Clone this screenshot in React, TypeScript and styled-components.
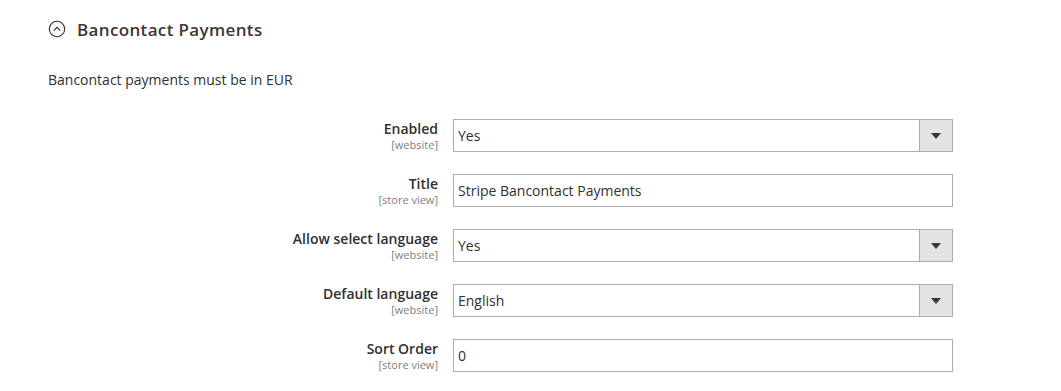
import React from 'react';
import styled, { createGlobalStyle } from 'styled-components';

const GlobalStyle = createGlobalStyle`
  html, body {
    margin: 0;
    padding: 0;
    background: #ffffff;
    font-family: "Open Sans", "Liberation Sans", Arial, sans-serif;
  }
`;

const Page = styled.div`
  padding: 15px 0 0 48px;
  width: 905px;
`;

const SectionTitle = styled.div`
  display: flex;
  align-items: center;
  gap: 11px;
  height: 28px;
  color: #41362f;
  font-size: 17px;
  font-weight: 600;
  letter-spacing: 0.35px;
`;

const Toggle = styled.span`
  display: inline-flex;
  width: 18px;
  height: 18px;
`;

const Note = styled.p`
  margin: 27px 0 0;
  font-size: 14px;
  color: #303030;
  line-height: 20px;
`;

const Fields = styled.div`
  display: flex;
  flex-direction: column;
  gap: 22px;
  margin-top: 29px;
`;

const Row = styled.div`
  display: grid;
  grid-template-columns: 390px 500px;
  column-gap: 15px;
  align-items: start;
`;

const Label = styled.div`
  display: flex;
  flex-direction: column;
  align-items: flex-end;
  padding-top: 1px;
  text-align: right;
`;

const LabelText = styled.span`
  font-size: 14px;
  font-weight: 600;
  color: #303030;
  line-height: 18px;
`;

const Scope = styled.span`
  font-size: 11px;
  color: #808080;
  line-height: 13px;
`;

const Control = styled.div`
  box-sizing: border-box;
  height: 33px;
  border: 1px solid #adadad;
  background: #fff;
  display: flex;
  align-items: stretch;
  font-size: 14px;
  color: #303030;
`;

const Value = styled.span`
  flex: 1;
  display: flex;
  align-items: center;
  padding-left: 4px;
`;

const Arrow = styled.span`
  width: 32px;
  border-left: 1px solid #adadad;
  background: #e3e3e3;
  display: flex;
  align-items: center;
  justify-content: center;
  &::after {
    content: '';
    border-left: 5px solid transparent;
    border-right: 5px solid transparent;
    border-top: 6px solid #41362f;
  }
`;

type Field = { label: string; scope: string; value: string; select: boolean };

const fields: Field[] = [
  { label: 'Enabled', scope: '[website]', value: 'Yes', select: true },
  { label: 'Title', scope: '[store view]', value: 'Stripe Bancontact Payments', select: false },
  { label: 'Allow select language', scope: '[website]', value: 'Yes', select: true },
  { label: 'Default language', scope: '[website]', value: 'English', select: true },
  { label: 'Sort Order', scope: '[store view]', value: '0', select: false },
];

export default function App() {
  return (
    <>
      <GlobalStyle />
      <Page>
        <SectionTitle>
          <Toggle>
            <svg width="18" height="18" viewBox="0 0 18 18" fill="none">
              <circle cx="9" cy="9" r="7.7" stroke="#303030" strokeWidth="1.1" />
              <path d="M5.8 10.6 L9 7.4 L12.2 10.6" stroke="#303030" strokeWidth="1.1" />
            </svg>
          </Toggle>
          Bancontact Payments
        </SectionTitle>
        <Note>Bancontact payments must be in EUR</Note>
        <Fields>
          {fields.map((f) => (
            <Row key={f.label}>
              <Label>
                <LabelText>{f.label}</LabelText>
                <Scope>{f.scope}</Scope>
              </Label>
              <Control>
                <Value>{f.value}</Value>
                {f.select && <Arrow />}
              </Control>
            </Row>
          ))}
        </Fields>
      </Page>
    </>
  );
}
